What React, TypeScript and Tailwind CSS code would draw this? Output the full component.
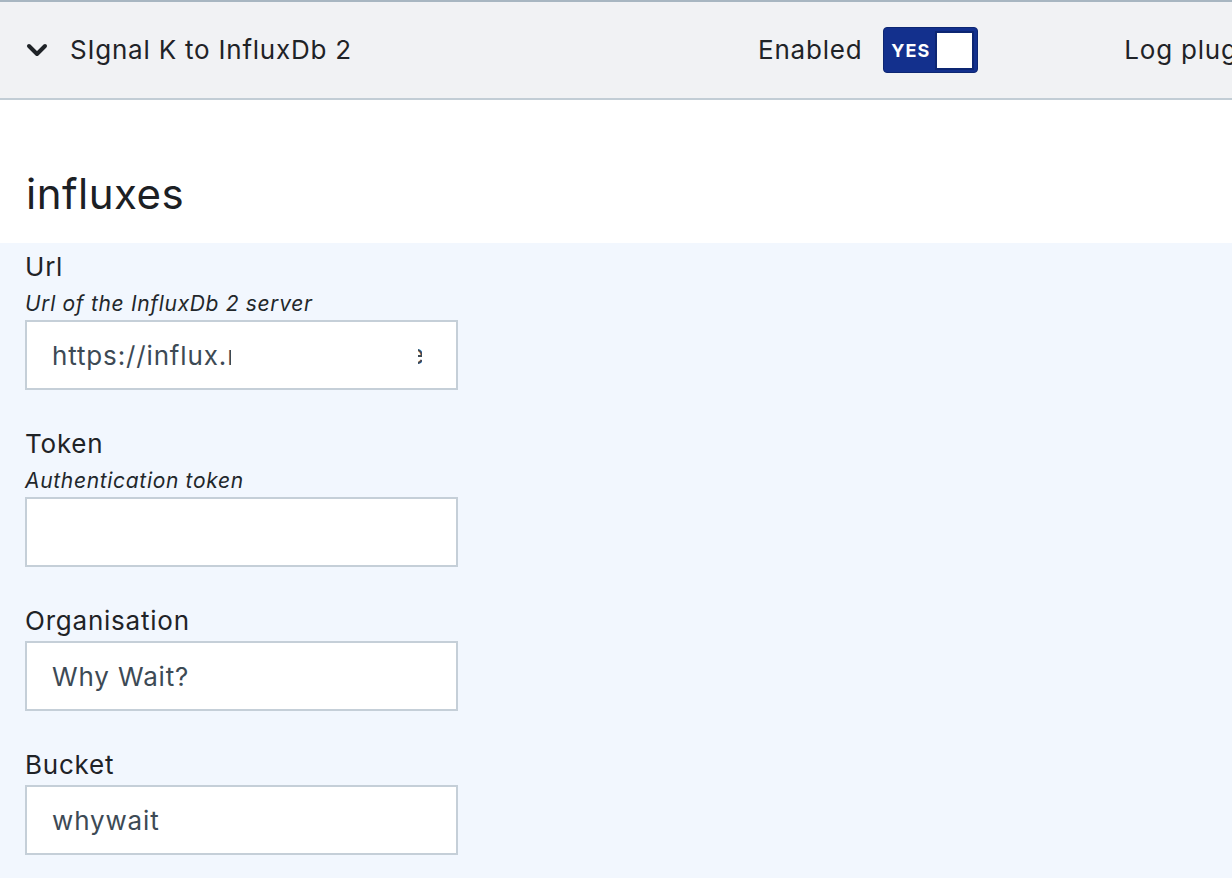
import React from "react";

const font = { fontFamily: "Inter, 'Noto Sans', sans-serif" };

function Field({
  label,
  hint,
  value,
  children,
}: {
  label: string;
  hint?: string;
  value?: string;
  children?: React.ReactNode;
}) {
  return (
    <div className="mb-[34px]">
      <div className="text-[26px] leading-[40px] tracking-[0.03em] text-[#1f2327]">{label}</div>
      {hint && (
        <div className="text-[21px] italic leading-[33px] tracking-[0.032em] text-[#22272b]">
          {hint}
        </div>
      )}
      <div className="relative w-[433px]">
        <input
          readOnly
          value={value ?? ""}
          className="block h-[70px] w-full border-2 border-[#c5cfd8] bg-white px-[25px] text-[26px] tracking-[0.033em] text-[#3d4a55] outline-none"
        />
        {children}
      </div>
    </div>
  );
}

export default function App() {
  return (
    <div className="min-h-[878px] w-[1232px] overflow-hidden bg-[#f2f7fe]" style={font}>
      {/* plugin header */}
      <div className="flex h-[100px] items-center border-t-2 border-b-2 border-t-[#a8b6c1] border-b-[#c2cdd5] bg-[#f1f2f4] text-[26px] tracking-[0.03em] text-[#1f2327]">
        <div className="flex w-[758px] shrink-0 items-center pl-[26px]">
          <svg width="22" height="15" viewBox="0 0 22 15" className="mr-[22px] mt-[1px]">
            <path
              d="M3 3 L11 11 L19 3"
              fill="none"
              stroke="#1f2327"
              strokeWidth="4"
              strokeLinecap="round"
              strokeLinejoin="round"
            />
          </svg>
          <span className="-mt-[2px]">SIgnal K to InfluxDb 2</span>
        </div>
        <div className="flex shrink-0 items-center gap-[21px]">
          <span className="-mt-[2px]">Enabled</span>
          <div className="flex h-[46px] w-[95px] items-center justify-between rounded-[4px] border border-[#0d2672] bg-[#13308d] pl-[7px] pr-[3px]">
            <span className="pt-[2px] text-[18px] font-bold leading-none tracking-[1px] text-white">
              YES
            </span>
            <span className="h-[39px] w-[39px] border-2 border-[#0d2672] bg-white" />
          </div>
        </div>
        <span className="-mt-[2px] ml-[146px] whitespace-nowrap">Log plugin output</span>
      </div>

      {/* section title */}
      <div className="h-[143px] bg-white pl-[26px] pt-[69px]">
        <h2 className="text-[42px] leading-[50px] tracking-[0.012em] text-[#1c2024]">influxes</h2>
      </div>

      {/* form */}
      <div className="pl-[25px] pt-[4px]">
        <Field label="Url" hint="Url of the InfluxDb 2 server" value="https://influx.ı">
          <span className="absolute left-[206px] top-[19px] h-[32px] w-[186px] bg-white" />
          <span className="absolute left-[393px] top-[19px] h-[32px] w-[4px] overflow-hidden text-[26px] leading-[32px] text-[#3d4a55]">
            <span className="-ml-[9px]">e</span>
          </span>
        </Field>
        <Field label="Token" hint="Authentication token" />
        <Field label="Organisation" value="Why Wait?" />
        <Field label="Bucket" value="whywait" />
      </div>
    </div>
  );
}
